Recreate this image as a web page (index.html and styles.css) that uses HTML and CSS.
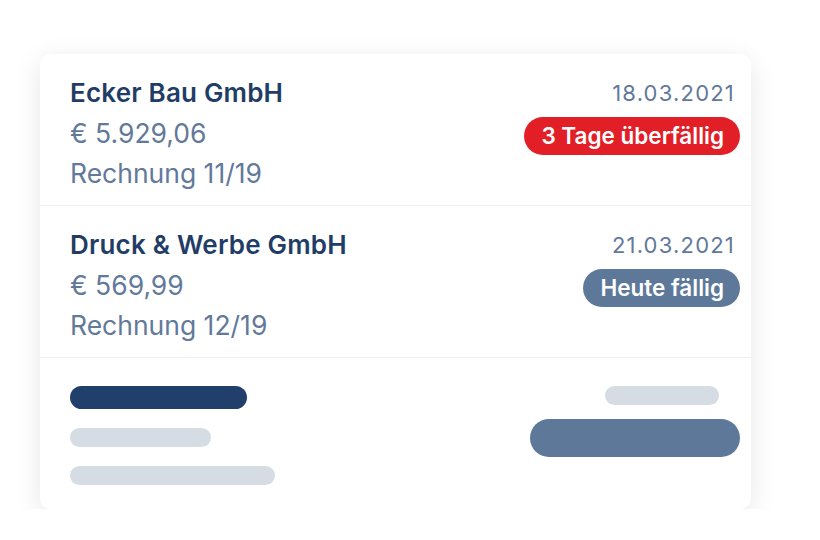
FILE: index.html
```html
<!DOCTYPE html>
<html lang="de">
<head>
  <meta charset="UTF-8" />
  <title>Offene Rechnungen</title>
  <link rel="stylesheet" href="styles.css">
</head>
<body>
  <div class="card">
    <div class="invoice">
      <div class="info">
        <div class="company">Ecker Bau GmbH</div>
        <div class="amount">€ 5.929,06</div>
        <div class="number">Rechnung 11/19</div>
      </div>
      <div class="status">
        <div class="date">18.03.2021</div>
        <span class="badge overdue">3 Tage überfällig</span>
      </div>
    </div>

    <div class="invoice">
      <div class="info">
        <div class="company">Druck &amp; Werbe GmbH</div>
        <div class="amount">€ 569,99</div>
        <div class="number">Rechnung 12/19</div>
      </div>
      <div class="status">
        <div class="date">21.03.2021</div>
        <span class="badge today">Heute fällig</span>
      </div>
    </div>

    <div class="invoice placeholder">
      <div class="info">
        <div class="bar bar-title"></div>
        <div class="bar bar-amount"></div>
        <div class="bar bar-number"></div>
      </div>
      <div class="status">
        <div class="bar bar-date"></div>
        <div class="bar bar-badge"></div>
      </div>
    </div>
  </div>
</body>
</html>
```

FILE: styles.css
```css
html, body {
  margin: 0;
  background: #fff;
  font-family: 'Inter', 'Noto Sans', sans-serif;
}

.card {
  margin: 54px 0 0 40px;
  width: 711px;
  background: #fff;
  border-radius: 10px;
  box-shadow: 0 6px 26px rgba(0, 0, 0, 0.1);
}

.invoice {
  display: flex;
  justify-content: space-between;
  height: 152px;
  box-sizing: border-box;
  padding: 19px 11px 0 30px;
  border-bottom: 1px solid #eef1f4;
}

.invoice:last-child {
  border-bottom: none;
  height: 151px;
}

.info {
  line-height: 40px;
}

.company {
  font-size: 26px;
  font-weight: 600;
  letter-spacing: 0.2px;
  color: #1f3d66;
}

.amount, .number {
  font-size: 26.5px;
  color: #62799a;
}

.status {
  display: flex;
  flex-direction: column;
  align-items: flex-end;
}

.date {
  font-size: 22px;
  line-height: 40px;
  letter-spacing: 1.2px;
  color: #62799a;
  margin-right: 5px;
}

.badge {
  display: inline-block;
  height: 38px;
  line-height: 38px;
  padding: 0 16px 0 17px;
  border-radius: 19px;
  font-size: 22.5px;
  font-weight: 600;
  color: #fff;
  margin-top: 4px;
}

.overdue {
  background: #e21f26;
}

.today {
  background: #5d7898;
}

/* skeleton row */
.placeholder .info {
  display: flex;
  flex-direction: column;
  gap: 19px;
  padding-top: 9px;
}

.placeholder .status {
  padding-top: 9px;
  gap: 14px;
}

.bar {
  border-radius: 12px;
  background: #d5dce4;
}

.bar-title {
  width: 177px;
  height: 23px;
  background: #213f6b;
}

.bar-amount {
  width: 141px;
  height: 19px;
}

.bar-number {
  width: 205px;
  height: 19px;
}

.bar-date {
  width: 114px;
  height: 19px;
  margin-right: 21px;
}

.bar-badge {
  width: 210px;
  height: 38px;
  border-radius: 19px;
  background: #5d7898;
}
```
